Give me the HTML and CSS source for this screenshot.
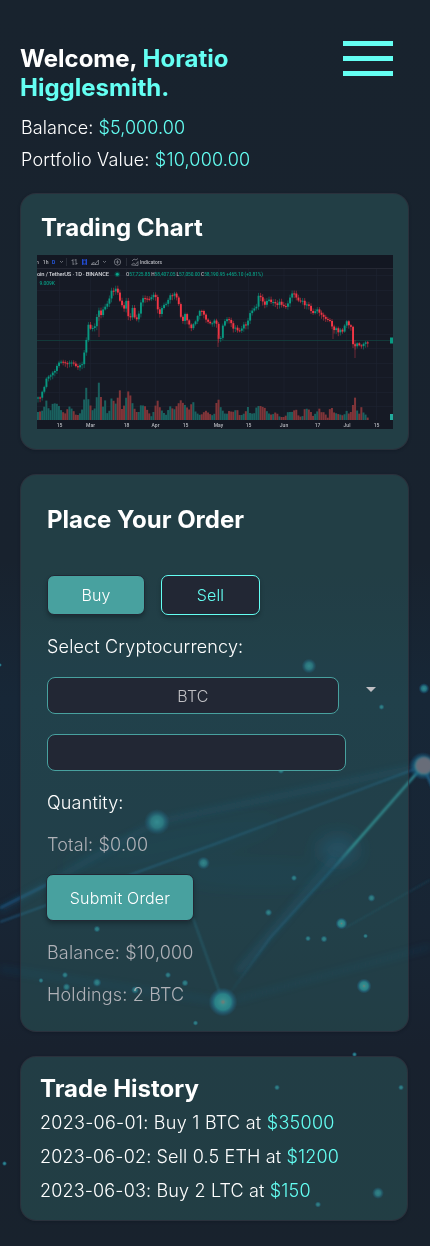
FILE: index.html
```html
<!DOCTYPE html>
<html lang="en">
<head>
<meta charset="utf-8">
<meta name="viewport" content="width=device-width, initial-scale=1">
<title>Trading Dashboard</title>
<link rel="stylesheet" href="styles.css">
</head>
<body>
<svg class="backdrop" viewBox="0 0 430 1246" aria-hidden="true">
  <defs>
    <filter id="b1" x="-50%" y="-50%" width="200%" height="200%"><feGaussianBlur stdDeviation="0.9"/></filter>
    <filter id="b3" x="-50%" y="-50%" width="200%" height="200%"><feGaussianBlur stdDeviation="3"/></filter>
    <filter id="b9" x="-100%" y="-100%" width="300%" height="300%"><feGaussianBlur stdDeviation="9"/></filter>
    <radialGradient id="node"><stop offset="0" stop-color="#38a6ac"/><stop offset=".45" stop-color="#2a8793"/><stop offset=".7" stop-color="#1c6280" stop-opacity=".7"/><stop offset="1" stop-color="#185078" stop-opacity="0"/></radialGradient>
    <radialGradient id="hot"><stop offset="0" stop-color="#967c74"/><stop offset=".2" stop-color="#38979a"/><stop offset=".55" stop-color="#23858f"/><stop offset=".75" stop-color="#1b5c80" stop-opacity=".7"/><stop offset="1" stop-color="#185078" stop-opacity="0"/></radialGradient>
    <linearGradient id="wash" x1="0" y1="0" x2="0" y2="1"><stop offset="0" stop-color="#18232e"/><stop offset=".45" stop-color="#18222e"/><stop offset=".56" stop-color="#172737"/><stop offset=".74" stop-color="#182534"/><stop offset=".84" stop-color="#18212e"/><stop offset="1" stop-color="#18222d"/></linearGradient>
    <linearGradient id="ray" gradientUnits="userSpaceOnUse" x1="423" y1="766" x2="225" y2="1000"><stop offset="0" stop-color="#2d8793"/><stop offset=".35" stop-color="#2f9a9c"/><stop offset=".45" stop-color="#1d608a" stop-opacity=".6"/><stop offset=".8" stop-color="#1d608a" stop-opacity=".4"/><stop offset="1" stop-color="#1d608a" stop-opacity="0"/></linearGradient>
  </defs>
  <rect width="430" height="1246" fill="url(#wash)"/>
  <g filter="url(#b9)" fill="#1d4b70">
    <ellipse cx="338" cy="850" rx="20" ry="14" opacity=".65"/>
    <ellipse cx="170" cy="845" rx="110" ry="14" opacity=".15" transform="rotate(-12 170 845)"/>
    <ellipse cx="260" cy="875" rx="80" ry="12" opacity=".15"/>
  </g>
  <g filter="url(#b3)" stroke="#1d5680" fill="none">
    <path d="M423 766L157 822L0 910" stroke-width="6" opacity=".28"/>
    <path d="M0 969L223 1002" stroke-width="7" opacity=".14"/>
    <path d="M235 1000L430 947" stroke-width="5" opacity=".16"/>
    <path d="M335 858L238 972" stroke-width="7" opacity=".3"/>
  </g>
  <g filter="url(#b1)" fill="none">
    <path d="M0 922L215 844L423 766" stroke="#206a98" stroke-width="1.6" opacity=".65"/>
    <path d="M0 908L48 884" stroke="#1e6092" stroke-width="3" opacity=".55"/>
    <path d="M423 766L338 863L270 938L225 1000" stroke="url(#ray)" stroke-width="2.6"/>
    <path d="M193 918L223 1002" stroke="#277b94" stroke-width="1.8" opacity=".45"/>
    <path d="M423 766L435 792" stroke="#1d5b80" stroke-width="3"/>
    <path d="M345 928L430 880" stroke="#24647c" stroke-width="1.2" opacity=".4"/>
  </g>
  <circle cx="157" cy="822" r="13" fill="url(#node)" opacity=".85"/>
  <circle cx="223" cy="1002" r="14.500" fill="url(#hot)"/>
  <circle cx="423" cy="766" r="14" fill="url(#node)"/>
  <circle cx="424" cy="765.5" r="8.6" fill="#686d79" filter="url(#b1)"/>
  <g fill="url(#node)" opacity=".8">
    <circle cx="309" cy="666" r="7.5"/><circle cx="424" cy="688.500" r="5.500"/><circle cx="381.500" cy="707" r="3"/>
    <circle cx="281" cy="770.500" r="3.500"/><circle cx="203.500" cy="863" r="6.500"/><circle cx="97" cy="929" r="3.500"/>
    <circle cx="65" cy="975" r="3.200"/><circle cx="66.500" cy="987" r="4"/><circle cx="97" cy="982.500" r="4.500"/><circle cx="41" cy="980.500" r="2.700"/>
    <circle cx="168" cy="975" r="3.200"/><circle cx="185" cy="983" r="3.600"/><circle cx="135" cy="990" r="4"/><circle cx="195.500" cy="1023" r="2.800"/>
    <circle cx="294" cy="878" r="3.200"/><circle cx="268.500" cy="912.500" r="3.800"/><circle cx="371.500" cy="898" r="4"/>
    <circle cx="308" cy="938.500" r="3"/><circle cx="324" cy="939" r="3.600"/><circle cx="365.500" cy="936" r="2.500"/>
    <circle cx="354.500" cy="1054.500" r="2.700"/><circle cx="277" cy="1087.500" r="3"/><circle cx="401" cy="1087.500" r="3"/>
    <circle cx="4.500" cy="1163.500" r="2.600"/><circle cx="378" cy="1193" r="6"/><circle cx="318" cy="1204.500" r="3.200"/><circle cx="0" cy="665" r="2"/>
  </g>
  <g fill="url(#hot)"><circle cx="341.500" cy="923.500" r="6"/><circle cx="364" cy="986" r="7.500"/></g>
</svg>
<div class="page">
  <header class="header">
    <div>
      <h1 class="heading">Welcome, <span class="accent">Horatio<br>Higglesmith.</span></h1>
      <p class="stat balance">Balance: <span class="accent">$5,000.00</span></p>
      <p class="stat">Portfolio Value: <span class="accent">$10,000.00</span></p>
    </div>
    <div class="menu" role="button" aria-label="Menu"><span class="bar"></span><span class="bar"></span><span class="bar"></span></div>
  </header>

  <section class="card chart-card">
    <h2 class="heading chart-title">Trading Chart</h2>
    <svg class="chart" viewBox="0 0 356 174">
      <rect width="356" height="174" fill="#161a25"/>
      <rect width="356" height="13.500" fill="#131722"/>
      <path d="M0 13.500H356" stroke="#292d38" stroke-width=".8"/>
      <path d="M22.500 14V165M53.500 14V165M89.500 14V165M118.500 14V165M148.500 14V165M181.500 14V165M211.500 14V165M247 14V165M280.500 14V165M309.500 14V165M339.500 14V165M0 20.500H356M0 35.500H356M0 50.500H356M0 64.500H356M0 79.500H356M0 93.500H356M0 108.500H356M0 122.500H356M0 137.500H356M0 151.500H356" stroke="#1f2430" stroke-width=".6" fill="none"/>
      <path d="M0 85.500H353" stroke="#12413f" stroke-width=".8"/>
      <g id="plot"></g>
      <rect y="165" width="356" height="9" fill="#141823"/>
      <rect x="353" y="82.500" width="3" height="6" fill="#089981"/><rect x="353" y="159" width="3" height="6" fill="#22ab9d"/>
      <g stroke="#8c8f98" stroke-width=".7" fill="none">
        <path d="M23 6l1.500 1.500L26 6M66 6l1.500 1.500L69 6M36 4v6M34.500 5.500H36M36 9h1.500M39 4v6M37.500 5H39M39 8.500h1.500M54 9.500l2.500-2 2 1 3-3.500v4.500zM56 10V7.500M58.500 10V8.500M78.700 7h3.600M80.500 5.200v3.600M94.500 10l2-2 2 1.500 2.500-3v4zM95 6l2-2 2 1 2-1.500"/>
        <circle cx="80.500" cy="7" r="3.200"/><path d="M29.500 3v8M89.500 3v8" stroke="#343843"/>
      </g>
      <path d="M45.500 4v6M49.500 4v6M46 5h3v4h-3z" stroke="#2454e8" fill="none" stroke-width=".8"/>
      <g class="chart-text">
        <text x="-1" y="8.500">h</text><text x="5.800" y="8.700">1h</text><text x="15" y="8.700" class="blue">D</text>
        <text x="103" y="8.700" textLength="22">Indicators</text>
        <text x="0" y="21.300" class="pair" textLength="72">oin / TetherUS · 1D · BINANCE</text>
        <text x="89" y="20.800" class="ohlc" textLength="137">O<tspan class="up">57,725.85</tspan> H<tspan class="up">58,407.05</tspan> L<tspan class="up">57,050.00</tspan> C<tspan class="up">58,190.95 +465.10 (+0.81%)</tspan></text>
        <text x="2.500" y="29.500" class="up" textLength="15.500">9.009K</text>
        <g text-anchor="middle"><text x="22.500" y="171.500">15</text><text x="53.500" y="171.500">Mar</text><text x="89.500" y="171.500">18</text><text x="118.500" y="171.500">Apr</text><text x="148.500" y="171.500">15</text><text x="181.500" y="171.500">May</text><text x="211.500" y="171.500">15</text><text x="247" y="171.500">Jun</text><text x="280.500" y="171.500">17</text><text x="310" y="171.500">Jul</text><text x="339.500" y="171.500">15</text></g>
      </g>
      <circle cx="80.300" cy="19.200" r="2.800" fill="#0b4240"/><circle cx="80.300" cy="19.200" r="1.500" fill="#0ba68b"/>
    </svg>
  </section>

  <section class="card order-card">
    <h2 class="heading">Place Your Order</h2>
    <div class="sides"><div class="btn buy">Buy</div><div class="btn sell">Sell</div></div>
    <p class="line">Select Cryptocurrency:</p>
    <div class="select-row">
      <div class="field select">BTC</div>
      <svg class="caret" viewBox="0 0 10 5"><path d="M0 0H10L5 5Z" fill="#bfbfc3"/></svg>
    </div>
    <div class="field amount"></div>
    <p class="line">Quantity:</p>
    <p class="line muted total">Total: $0.00</p>
    <div class="btn submit">Submit Order</div>
    <p class="line muted">Balance: $10,000</p>
    <p class="line muted holdings">Holdings: 2 BTC</p>
  </section>

  <section class="card history-card">
    <h2 class="heading">Trade History</h2>
    <p class="trade first">2023-06-01: Buy 1 BTC at <span class="accent">$35000</span></p>
    <p class="trade">2023-06-02: Sell 0.5 ETH at <span class="accent">$1200</span></p>
    <p class="trade">2023-06-03: Buy 2 LTC at <span class="accent">$150</span></p>
  </section>
</div>
<script src="chart.js"></script>
</body>
</html>
```
FILE: styles.css
```css
* { box-sizing: border-box; }
body {
  margin: 0;
  background: #18222d;
  color: #fff;
  font-family: Inter, sans-serif;
  font-size: 18px;
  font-weight: 300;
  letter-spacing: .16px;
  line-height: 22px;
}
h1, h2, p { margin: 0; }
.backdrop { position: absolute; left: 0; top: 0; width: 430px; height: 1246px; z-index: -1; }
.page { width: 430px; height: 1246px; padding: 44px 21px 0 20px; }
.header { display: flex; justify-content: space-between; height: 149px; }
.heading { font-size: 24px; font-weight: 700; letter-spacing: 0; line-height: 29px; }
.accent { color: #64fff3; }
.stat { margin-left: 1px; line-height: 32px; letter-spacing: .19px; }
.balance { margin-top: 10px; letter-spacing: .07px; }
.menu { display: flex; flex-direction: column; gap: 10px; width: 50px; margin: -3px 16px 0 0; }
.bar { height: 5px; background: #64fff3; }
.card {
  border-radius: 16px;
  background: rgba(57, 120, 118, .32);
  border: 1px solid rgba(48, 41, 55, .6);
  box-shadow: 0 1px 3px rgba(10, 15, 25, .3);
}
.chart-card { height: 257px; padding: 19px 16px; }
.chart-title { margin-left: 4px; letter-spacing: .05px; }
.chart { display: block; width: 356px; height: 174px; margin-top: 13px; }
.chart-text { font-family: Roboto, sans-serif; font-size: 5px; font-weight: 500; letter-spacing: 0; fill: #b6b8be; }
.pair { font-size: 5.800px; font-weight: 500; fill: #d1d3d8; }
.ohlc { font-size: 4.800px; }
.up { fill: #089981; }
.blue { fill: #2962ff; }
.order-card { height: 558px; margin-top: 24px; padding: 30px 26px; }
.sides { display: flex; align-items: center; gap: 16px; margin-top: 41px; }
.btn {
  display: flex;
  align-items: center;
  justify-content: center;
  border-radius: 7px;
  font-size: 16px;
  box-shadow: 0 3px 4px rgba(0, 0, 0, .25);
}
.buy { width: 98px; height: 40px; background: #48a19f; border: 1px solid #222734; }
.sell { width: 99px; height: 40px; background: #222734; border: 1px solid #64fff3; color: #64fff3; }
.sides + .line { margin-top: 21px; }
.select-row { display: flex; margin-top: 19px; }
.field {
  display: flex;
  align-items: center;
  justify-content: center;
  height: 37px;
  border: 1px solid #48a19f;
  border-radius: 8px;
  background: #222734;
  font-size: 16px;
  color: #bfbfc3;
}
.select { width: 292px; }
.caret { width: 10px; height: 5px; margin: 10px 0 0 27px; }
.amount { width: 299px; margin-top: 20px; }
.amount + .line { margin-top: 21px; }
.muted { color: #b0b2b8; }
.total { margin-top: 20px; }
.submit { width: 148px; height: 47px; margin: 18px 0 21px -1px; background: #48a19f; border: 1px solid #222734; }
.holdings { margin-top: 20px; }
.history-card { width: 388px; height: 165px; margin-top: 24px; padding: 17px 19px; }
.history-card .heading { margin-bottom: 2.500px; }
.trade { line-height: 34px; }
.first { letter-spacing: .26px; }
```
FILE: chart.js
```js
// Price and volume keyframes as x,value pairs in plot coordinates.
const price = [1,142.5,3,142,5,136,7,133,9,125,11,123,13,122,15,117,17,116,19,113,20.5,109,23,108,33,107,37,110,40,113,43,109,45,109,47,99,49,89,51,70,54,74,57,70,59,71,61,49,63,66,65,56,67,53,69,49,71,47,73,42,75,35,77,38,79,33,81,37,83,45,85,50,87,55,88,50,90,45,91,57,92,72,94,57,96,50,98,65,101,65,103,52,105,43,107,42,110,43,112,45,115,43,118,38,120,50,122,59,124,57,126,49,128,53,130,47,132,43,134,37,136,41,138,38,140,45,142,51,144,63,146,65,148,58,150,65,152,70,154,75,156,70,158,67,160,61,163,55,165,57,167,61,169,65,175,68,179,65,181,85,184,82,186,68,189,64,192,66,195,70,197,75,199,70,201,76,204,76,208,68,210,73,212,56,214,58,216,54,219,55,222,38,224,42,226,46,228,50,231,45,235,48,237,45,240,50,243,47,245,52,249,51,251,47,253,42,255,39,258,40,260,45,267,45,268,53,271,49,273,55,276,57,280,54,283,60,287,62,291,64,294,67,296,78,299,73,301,77,303,73,306,77,308,70,310,67,312,71,314,71,316,88,319,92,321,87,323,94,326,89,328,86,331,87];
const volume = [1,8,5,9,7,12,9,21,11,13,13,8,16,17,21,16,24,10,28,6,32,14,36,10,39,5,42,5,45,10,47,19,49,34,51,22,54,13,56,9,58,12,60,24,62,38,64,23,66,13,68,21,70,7,72,6,74,22,76,20,79,16,83,30,85,11,87,14,91,29,93,26,96,15,99,8,102,8,104,15,108,14,112,7,115,3,118,13,121,20,123,12,126,8,129,5,133,14,137,10,139,13,144,20,146,17,149,14,152,10,156,20,158,9,162,5,166,6,168,10,173,6,177,4,179,15,181,23,183,14,186,9,189,5,192,9,196,8,200,11,203,4,208,7,211,13,213,7,217,6,220,14,224,14,228,12,231,7,235,5,239,8,243,3,248,3,251,8,255,8,259,11,262,3,266,4,268,12,273,10,276,4,280,8,282,12,285,7,287,8,291,2,294,16,296,8,301,6,305,5,307,4,309,10,313,5,316,15,318,23,320,10,322,5,324,14,326,8,329,5,331,2];
const sample = (keys, x) => {
  let i = 0;
  while (i < keys.length - 4 && keys[i + 2] < x) i += 2;
  const t = (x - keys[i]) / (keys[i + 2] - keys[i]);
  return keys[i + 1] + (keys[i + 3] - keys[i + 1]) * Math.min(1, Math.max(0, t));
};
let marks = '';
let open = 143;
const step = 2.1;
for (let i = 0; i < 158; i++) {
  const x = 1 + i * step;
  const close = sample(price, x) + Math.sin(i * 7.3) * 1.2;
  const up = close <= open;
  const top = Math.min(open, close);
  const size = Math.max(1, Math.abs(close - open));
  const high = top - 1 - 2 * Math.abs(Math.sin(i * 3.1));
  const low = top + size + 1 + 3 * Math.abs(Math.cos(i * 2.7));
  const color = up ? '#089981' : '#f23645';
  const h = Math.max(2, sample(volume, x));
  marks += `<rect x="${x - 1.05}" y="${165 - h}" width="2" height="${h}" fill="${up ? '#1a615f' : '#803539'}"/>`;
  marks += `<path d="M${x} ${high}V${low}" stroke="${color}" stroke-width=".5"/>`;
  marks += `<rect x="${x - 0.9}" y="${top}" width="1.9" height="${size}" fill="${color}"/>`;
  open = close;
}
for (const [x, a, b] of [[62, 60, 82], [181, 80, 92], [296, 72, 84], [318, 85, 103]]) {
  marks += `<path d="M${x} ${a}V${b}" stroke="#a92f3e" stroke-width=".6"/>`;
}
document.getElementById('plot').innerHTML = marks;
```
